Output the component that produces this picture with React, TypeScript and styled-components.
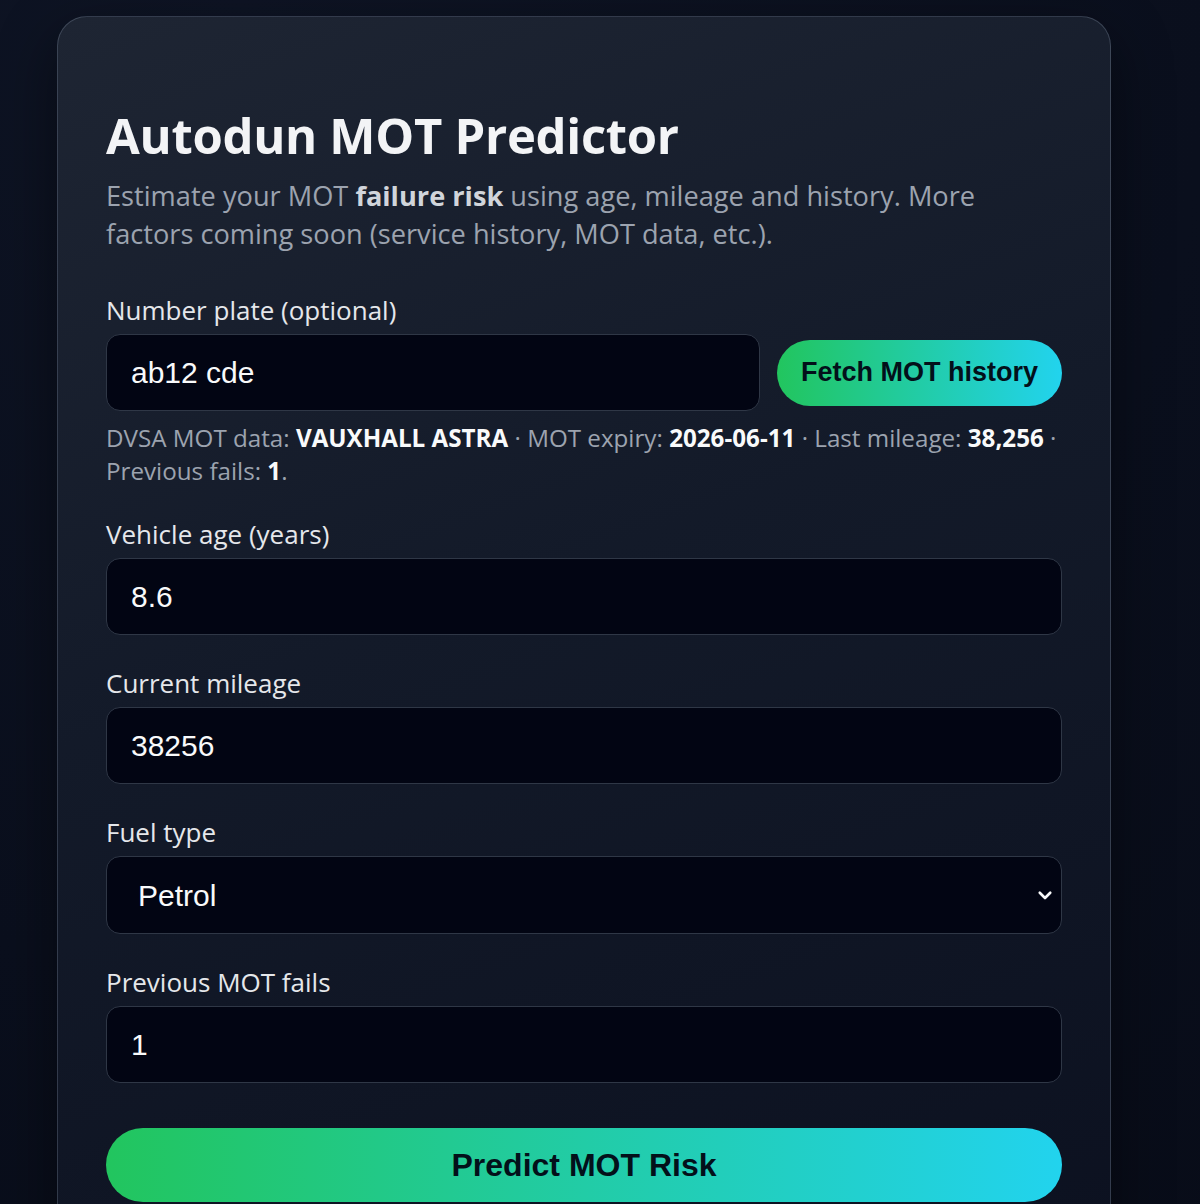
import React, {useState} from 'react';
import styled, {createGlobalStyle} from 'styled-components';

const GlobalStyle = createGlobalStyle`
  html, body {
    margin: 0;
    padding: 0;
    background: #0b1020;
  }
  body {
    font-family: 'Open Sans', 'Noto Sans', sans-serif;
    color: #e5e7eb;
  }
`;

const Page = styled.main`
  min-height: 1204px;
  padding: 16px 89px 40px 57px;
  background: radial-gradient(circle at 20% 0%, #0e1424 0%, #0a0f1d 60%, #080c18 100%);
`;

const Card = styled.section`
  border: 1px solid rgba(148, 163, 184, 0.28);
  border-radius: 30px;
  padding: 88px 48px 60px 48px;
  background: linear-gradient(160deg, #1e2533 0%, #131a29 45%, #0c1120 100%);
  box-shadow: 0 20px 60px rgba(0, 0, 0, 0.45);
`;

const Title = styled.h1`
  margin: 0;
  font-size: 49px;
  line-height: 60px;
  font-weight: 700;
  color: #f3f4f6;
  letter-spacing: -0.3px;
`;

const Subtitle = styled.p`
  margin: 12px 0 0;
  font-size: 27.2px;
  line-height: 38px;
  color: #9ca3af;

  strong {
    color: #d1d5db;
    font-weight: 700;
  }
`;

const Field = styled.div<{$top?: number}>`
  display: flex;
  flex-direction: column;
  gap: 6px;
  margin-top: ${p => p.$top ?? 30}px;
`;

const Label = styled.label`
  font-size: 26px;
  line-height: 36px;
  color: #e5e7eb;
`;

const Row = styled.div`
  display: flex;
  align-items: center;
  gap: 17px;
`;

const Input = styled.input<{$grow?: boolean}>`
  box-sizing: border-box;
  width: 100%;
  min-width: 0;
  height: 77px;
  padding: 0 24px;
  border: 1.5px solid #2f3746;
  border-radius: 14px;
  background: #020513;
  color: #f9fafb;
  font-family: 'Liberation Sans', Arial, sans-serif;
  font-size: 30px;
  outline: none;
  flex: ${p => (p.$grow ? '1 1 0' : 'none')};
`;

const SelectWrap = styled.div`
  position: relative;
`;

const Select = styled.select`
  box-sizing: border-box;
  width: 100%;
  height: 78px;
  padding: 0 31px;
  border: 1.5px solid #2f3746;
  border-radius: 14px;
  background: #020513;
  color: #f9fafb;
  font-family: 'Liberation Sans', Arial, sans-serif;
  font-size: 30px;
  appearance: none;
  outline: none;
`;

const Chevron = styled.svg`
  position: absolute;
  right: 8px;
  top: 50%;
  width: 18px;
  height: 18px;
  transform: translateY(-50%);
  pointer-events: none;
`;

const PillButton = styled.button<{$wide?: boolean}>`
  border: none;
  border-radius: 999px;
  background: linear-gradient(90deg, #22c55e 0%, #22d3ee 100%);
  color: #03101a;
  font-family: 'Liberation Sans', Arial, sans-serif;
  font-weight: 700;
  cursor: pointer;
  flex-shrink: 0;
  padding: 0;
  width: ${p => (p.$wide ? '100%' : '285px')};
  height: ${p => (p.$wide ? '74px' : '66px')};
  font-size: ${p => (p.$wide ? '32px' : '27px')};
  margin-top: ${p => (p.$wide ? '45px' : '0')};
`;

const Info = styled.p`
  margin: 10px 0 0;
  font-size: 24.2px;
  line-height: 33px;
  color: #9ca3af;

  b {
    color: #f9fafb;
    font-weight: 700;
  }
`;

export default function App() {
  const [plate, setPlate] = useState('ab12 cde');
  const [age, setAge] = useState('8.6');
  const [mileage, setMileage] = useState('38256');
  const [fuel, setFuel] = useState('Petrol');
  const [fails, setFails] = useState('1');

  return (
    <>
      <GlobalStyle />
      <Page>
        <Card>
          <Title>Autodun MOT Predictor</Title>
          <Subtitle>
            Estimate your MOT <strong>failure risk</strong> using age, mileage and history. More
            factors coming soon (service history, MOT data, etc.).
          </Subtitle>

          <Field $top={39}>
            <Label>Number plate (optional)</Label>
            <Row>
              <Input $grow value={plate} onChange={e => setPlate(e.target.value)} />
              <PillButton>Fetch MOT history</PillButton>
            </Row>
          </Field>
          <Info>
            DVSA MOT data: <b>VAUXHALL ASTRA</b> · MOT expiry: <b>2026-06-11</b> · Last mileage:{' '}
            <b>38,256</b> · Previous fails: <b>1</b>.
          </Info>

          <Field $top={29}>
            <Label>Vehicle age (years)</Label>
            <Input value={age} onChange={e => setAge(e.target.value)} />
          </Field>

          <Field>
            <Label>Current mileage</Label>
            <Input value={mileage} onChange={e => setMileage(e.target.value)} />
          </Field>

          <Field>
            <Label>Fuel type</Label>
            <SelectWrap>
              <Select value={fuel} onChange={e => setFuel(e.target.value)}>
                <option>Petrol</option>
                <option>Diesel</option>
                <option>Hybrid</option>
                <option>Electric</option>
              </Select>
              <Chevron viewBox="0 0 24 24" fill="none" stroke="#f9fafb" strokeWidth="3.5" strokeLinecap="round" strokeLinejoin="round">
                <path d="M5 9l7 7 7-7" />
              </Chevron>
            </SelectWrap>
          </Field>

          <Field>
            <Label>Previous MOT fails</Label>
            <Input value={fails} onChange={e => setFails(e.target.value)} />
          </Field>

          <PillButton $wide>Predict MOT Risk</PillButton>
        </Card>
      </Page>
    </>
  );
}
